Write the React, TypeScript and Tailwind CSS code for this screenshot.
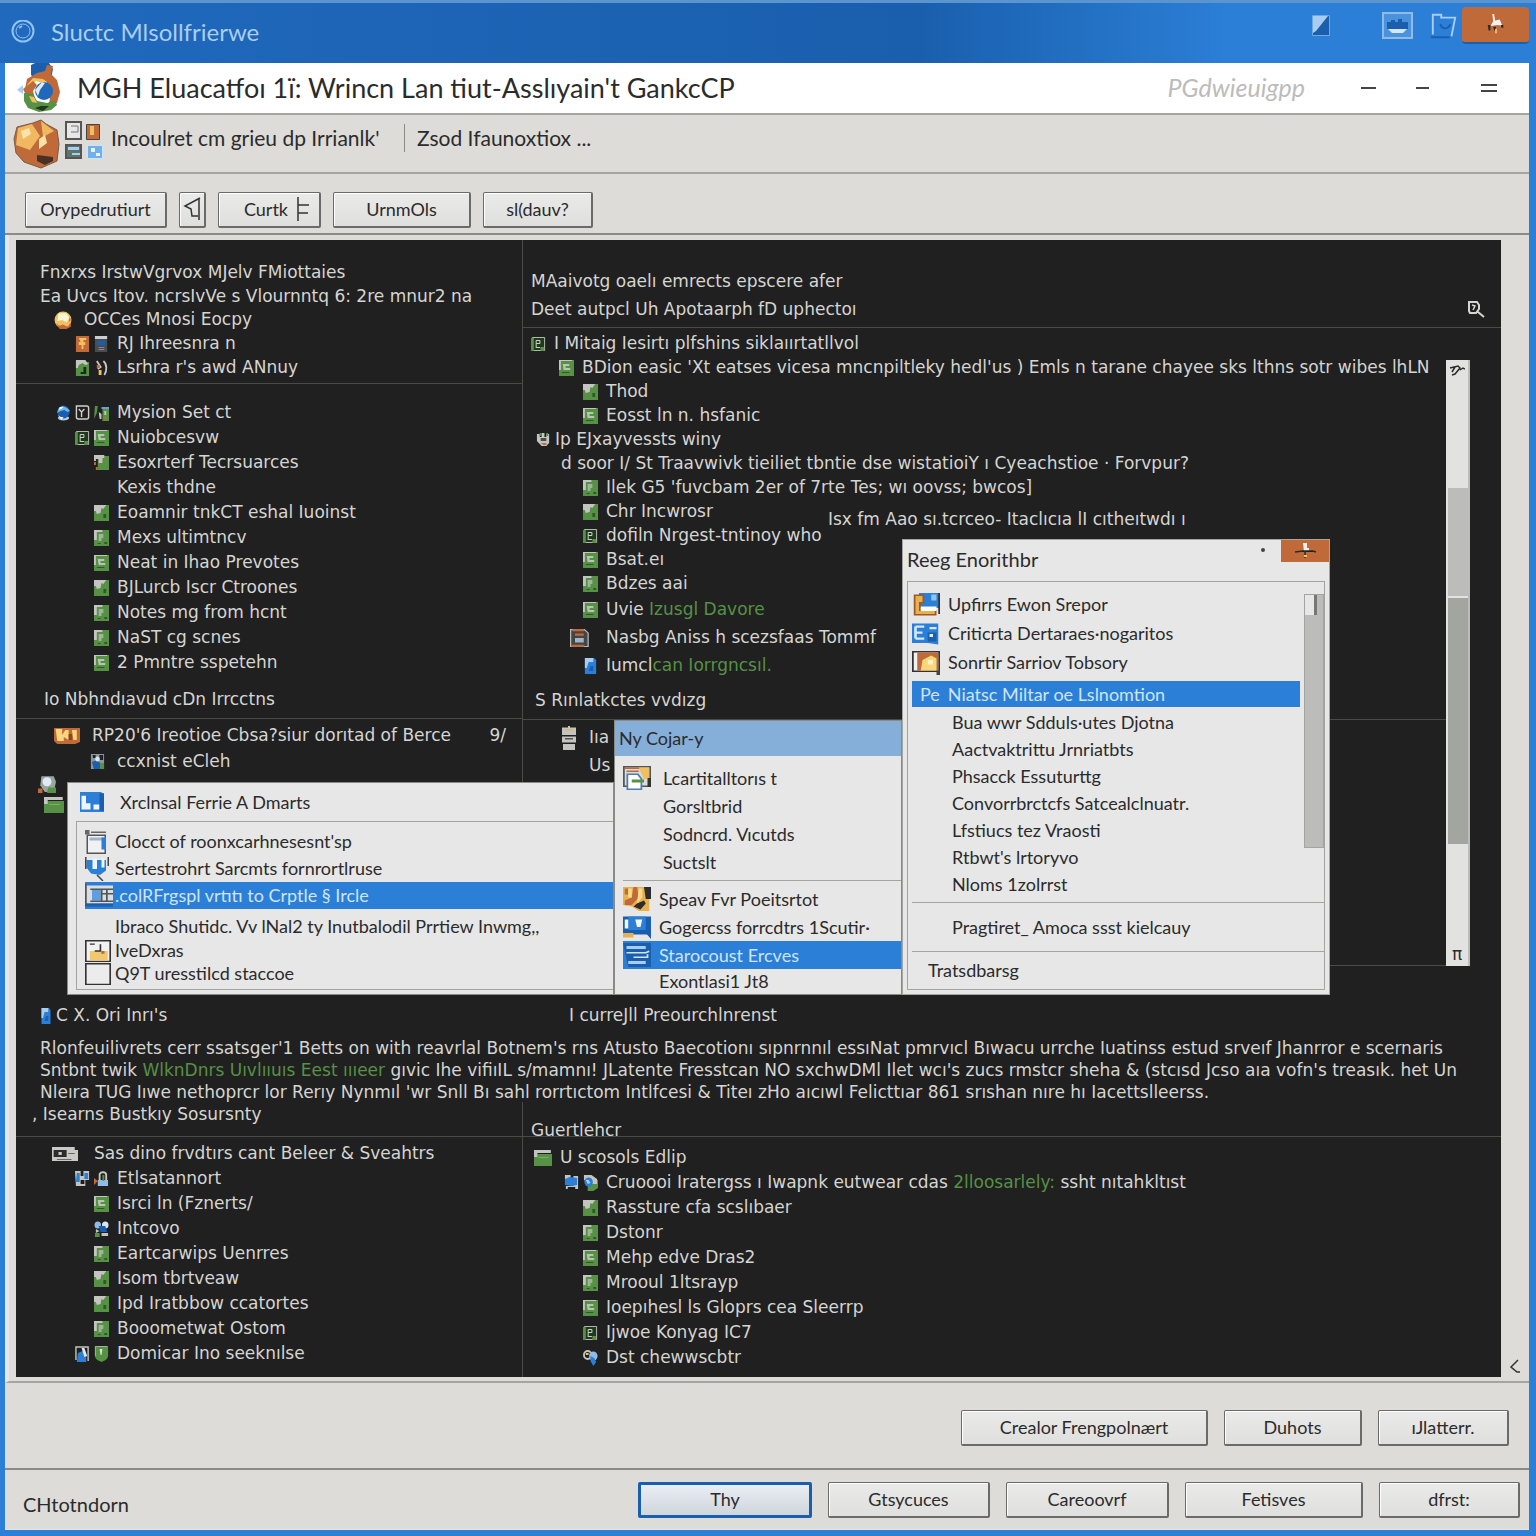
import type { ReactNode } from "react";
import clsx from "clsx";

const icons: Record<string, ReactNode> = {
  page: (
    <>
      <path fill="#569145" d="M0 0h16v16H0z" />
      <path fill="#c4c4c0" d="M0 0h9v2H3v8H0z" />
      <path fill="#9fb598" d="M5 4h5v4H8v3H5z" />
      <path fill="#2f5a28" d="M11 12h3v2h-3zM4 13h3v1H4z" />
    </>
  ),
  pageR: (
    <>
      <path fill="#569145" d="M0 0h16v16H0z" />
      <path fill="#c4c4c0" d="M0 0h14v1H2v9H0z" />
      <path fill="#b9c4b4" d="M4 4h7v2H7v2h5v2H5z" />
      <path fill="#2f5a28" d="M3 12h8v1H3z" />
    </>
  ),
  pageM: (
    <>
      <path fill="#569145" d="M0 0h16v16H0z" />
      <path fill="#c4c4c0" d="M0 0h13l-3 4-2-1-1 5-4 1-1-3H0z" />
      <path fill="#2f5a28" d="M10 9h3v4h-3z" />
    </>
  ),
  pageBox: (
    <>
      <path fill="#1f3a1b" d="M1 1h14v14H1z" />
      <path fill="none" stroke="#b9b9b5" d="M1.500 1.500h13v13h-13z" />
      <path fill="#569145" d="M0 2h3v13H0zM10 11h4v4h-4z" />
      <path fill="none" stroke="#d5d5d2" d="M5.500 12V4.500h4v3h-4m0 4h4" />
    </>
  ),
  slate: (
    <>
      <path fill="none" stroke="#d0d0cc" strokeWidth="1.500" d="M1.500 1h11c1 0 2 1 2 2v9c0 1.500-1 2-2 2h-9c-1 0-2-.5-2-2z" />
      <path fill="none" stroke="#d0d0cc" strokeWidth="1.500" d="M4 4l3 3 3-3M7 7v5" />
    </>
  ),
  plant: (
    <>
      <path fill="#569145" d="M1 1h3L3 8l-3 6zM9 3h7v13H9z" />
      <path fill="#6f9fd0" d="M8 2h8v2H8z" />
      <path fill="#c4c4c0" d="M5 7l3 2v5H6zM11 6h2v4h-2z" />
      <path fill="#c06a3a" d="M11 12h2v3h-2z" />
    </>
  ),
  flag: (
    <>
      <path fill="#569145" d="M4 1h12v14H4z" />
      <path fill="#c4c4c0" d="M0 0h11v3H9v5H5V4H2v2H0z" />
      <path fill="#c06a3a" d="M0 7h2v3H0zM2 12h2v3H2z" />
    </>
  ),
  sun: (
    <>
      <circle cx="8" cy="8" r="7.500" fill="#f0c060" />
      <path fill="#fff3d0" d="M4 2h7l3 4-3 4-4-2-4 1z" />
      <path fill="#c06a3a" d="M2 11l3 2 3-1 4 2 3-4v4l-4 2H5zM14 5l1 3-2 2z" />
    </>
  ),
  book: (
    <>
      <path fill="#c06a3a" d="M1 0h14v16H1z" />
      <path fill="#f0c060" d="M4 2h8v2H9v2h2v3H9v4H7V9H4V6h2z" />
    </>
  ),
  phone: (
    <>
      <path fill="#4a4c50" d="M1 0h13v16H1z" />
      <path fill="#c9ced3" d="M1 0h13v3H1z" />
      <path fill="#1a5fae" d="M3 5h9v4H3z" />
      <path fill="#85888c" d="M5 11h6v1H5zM5 13h6v1H5z" />
    </>
  ),
  notes: (
    <>
      <path fill="#569145" d="M1 2h14v14H1z" />
      <path fill="#c4c4c0" d="M1 0h10l3 4-3 1-3-2-4 2-1 3H1z" />
      <path fill="#1d2b1a" d="M9 7h3v7H6v-2h3z" />
    </>
  ),
  hook: (
    <>
      <path fill="none" stroke="#c4c4c0" strokeWidth="2" d="M10 1c4 3 4 10 1 14M3 1l4 6-3 2" />
      <path fill="#c06a3a" d="M3 5h3v3H3z" />
      <path fill="#f0c060" d="M5 10h3v5H5z" />
    </>
  ),
  globe: (
    <>
      <ellipse cx="8" cy="13" rx="6" ry="2.500" fill="#b4cbe2" />
      <circle cx="8" cy="7" r="6.500" fill="#1a5fae" />
      <path fill="#6fb0ee" d="M3 3l4-2 5 2 3 3-3 1-3-2-4 1-4 2z" />
      <path fill="#eaf4ff" d="M4 2h4l-2 2-3 1zM2 10l3 2h3l-2 3z" />
    </>
  ),
  camera: (
    <>
      <path fill="#c4c4c0" d="M1 2h3v3h2V1h3v4h2V2h3v9l-3 3H6L1 9z" />
      <path fill="#569145" d="M4 1h2v3H4zM11 1h2v3h-2z" />
      <path fill="#4b4b4b" d="M5 6h6v3H5z" />
      <path fill="#c06a3a" d="M5 11h6v2H8z" />
    </>
  ),
  drive: (
    <>
      <path fill="#454545" stroke="#b9b9b5" d="M.5.5h11l3 3v12H.5z" />
      <path fill="#c06a3a" d="M2 0h9v2H2zM1 14h10v2H1zM4 4h7v2H4z" />
      <path fill="#9db4cb" d="M4 8h7v4H4z" />
    </>
  ),
  bluePage: (
    <>
      <path fill="#2b7fd6" d="M2 0h10l2 2v14H2z" />
      <path fill="#a9cdf0" d="M2 0h9v4L6 4l-2 6H2z" />
      <path fill="#1a5fae" d="M8 8h3v5H6z" />
    </>
  ),
  chest: (
    <>
      <path fill="#c06a3a" d="M0 0h16v14l-3 2H2l-2-3z" />
      <path fill="#f8d67c" d="M1 1h4v6l2-5h2v10L6 9v4H2zM11 2h3v10h-2z" />
      <path fill="#8b4320" d="M9 6h2v6H9z" />
    </>
  ),
  user: (
    <>
      <path fill="#8f9698" d="M1 0h14v15H1z" />
      <path fill="#1c2430" d="M3 1h3v3H3zM10 1h4v5h-4z" />
      <path fill="#1a5fae" d="M2 8l5-2 4 3v6H4z" />
      <path fill="#569145" d="M11 9h4v6h-4z" />
      <circle cx="8" cy="5" r="2.500" fill="#dce8f3" />
    </>
  ),
  person: (
    <>
      <path fill="none" stroke="#c4c4c0" strokeWidth="1.500" d="M1 14V1h13v14" />
      <path fill="#2b7fd6" d="M3 7l5-2 4 4v7H2z" />
      <path fill="#dce8f3" d="M7 2h3l3 8-3 1z" />
    </>
  ),
  cabinet: (
    <>
      <path fill="#c4c4c0" d="M1 1h6V0h2v1h6v5H1zM1 7h14v4H1zM2 12h12v4H2z" />
      <path fill="#e0b664" d="M4 2h8v1H4z" />
      <path fill="#555" d="M4 8h8v1H4z" />
    </>
  ),
  card: (
    <>
      <path fill="#c9c9c5" d="M0 1h14v3h2v11H0z" />
      <path fill="#2c2c2c" d="M1 4h8v7H1z" />
      <path fill="#c9c9c5" d="M4 6h2v3H4z" />
      <path fill="#686868" d="M10 7h4v1h-4zM3 13h9v1H3z" />
    </>
  ),
  plug: (
    <>
      <path fill="#c4c4c0" d="M0 0h6v5h3V0h6v9h-4v6H1z" />
      <path fill="#2b7fd6" d="M2 2h3v9H1zM10 2h4v6h-4z" />
      <path fill="#1d1d1d" d="M6 9h4v4H6z" />
    </>
  ),
  lock: (
    <>
      <path fill="none" stroke="#c4c4c0" strokeWidth="2" d="M6 9V3c2-3 7-2 7 1v5" />
      <path fill="#8fbbe6" d="M4 9h11v6H4z" />
      <path fill="#c06a3a" d="M0 7l4 3-4 4z" />
      <path fill="#569145" d="M9 4h2v6H9z" />
    </>
  ),
  people: (
    <>
      <circle cx="4" cy="4" r="3.500" fill="#8fbbe6" />
      <circle cx="12" cy="4" r="3.500" fill="#d6e6f5" />
      <path fill="#1a5fae" d="M5 5h7l2 6H7z" />
      <path fill="#c4c4c0" d="M8 12h7v3H8zM2 8l4 2-4 2z" />
      <path fill="#569145" d="M1 12h5v4H1z" />
    </>
  ),
  shield: (
    <>
      <path fill="#569145" d="M1 0h14v10c0 3-4 5-7 6-3-1-7-3-7-6z" />
      <path fill="#d5e4d0" d="M6 3h3l-1 6H7z" />
      <path fill="none" stroke="#9fb598" d="M1.500 10V.5H14" />
    </>
  ),
  bluePin: (
    <>
      <circle cx="5" cy="5" r="4" fill="none" stroke="#c4c4c0" strokeWidth="2" />
      <circle cx="11" cy="6" r="4.500" fill="#8fbbe6" />
      <path fill="#2b7fd6" d="M8 6l4 2 2 4-3 4-3-5z" />
      <path fill="#f0c060" d="M3 3h3v2H3z" />
    </>
  ),
  globePage: (
    <>
      <path fill="#569145" d="M5 5h11v8l-5 3H5z" />
      <path fill="#c4c4c0" d="M1 0h8l6 4v5H9L1 5z" />
      <circle cx="6" cy="7" r="4.500" fill="#2b7fd6" />
      <path fill="#a9cdf0" d="M3 5h3l2 3-3 1z" />
    </>
  ),
  cloud: (
    <>
      <path fill="#c4c4c0" d="M1 0h6v4H1zM10 1h5v13H2v-3h8z" />
      <path fill="#2b7fd6" d="M1 4l5-2 8 1v7l-6 1-7-1z" />
      <path fill="#1d1d1d" d="M4 12h8v2H4z" />
    </>
  ),
  orb: (
    <>
      <path fill="#9aa59c" d="M3 1h11l2 5-2 9H6L2 9z" />
      <path fill="#569145" d="M9 11h7v5H8z" />
      <circle cx="8" cy="6" r="4" fill="#dfeaf5" />
      <path fill="#c06a3a" d="M0 12h4v4H0z" />
    </>
  ),
  folder: (
    <>
      <path fill="#569145" d="M0 4h16v12H0z" />
      <path fill="#c4c4c0" d="M0 0h15v3H3v4H0z" />
      <path fill="#78b06a" d="M4 7h9v1H4z" />
    </>
  ),
  disk: (
    <>
      <path fill="#2b7fd6" d="M0 0h14l2 2v14H0z" />
      <path fill="#eef5fc" d="M1 3h3v6h3v5H1zM9 10h4v4H9z" />
      <path fill="#1a5fae" d="M13 1h3v14h-3z" />
    </>
  ),
  clipboard: (
    <>
      <path fill="#f1f1f1" stroke="#555" d="M1.500 3.500h12v12h-12z" />
      <path fill="#9db4cb" d="M3 5h10v2H3z" />
      <path fill="#2b7fd6" d="M11 5h3v8h-3z" />
      <path fill="#666" d="M0 0h3v3H0zM4 1h10v1H4z" />
    </>
  ),
  brush: (
    <>
      <path fill="#2b7fd6" d="M1 2h13v7l-4 3-6-1-3-4z" />
      <path fill="#eef5fc" d="M5 1h3v7H5zM11 1h2v6h-2z" />
      <path fill="none" stroke="#444" d="M.5 0v8M15.500 0v6M8 12l4 4" />
    </>
  ),
  board: (
    <>
      <path fill="#d7dde3" d="M0 1h16v12H0z" />
      <path fill="#5d9fe0" d="M4 4h5v7H4z" />
      <path fill="#1a5fae" d="M0 13h16v2H0z" />
      <path fill="none" stroke="#555" d="M.5 0v14M3 3.500h13M9.500 4v8M10 6.500h6M3 11.500h13M12.500 4v8" />
    </>
  ),
  note: (
    <>
      <path fill="#f1f1f1" stroke="#333" d="M.5.5h15v15H.5z" />
      <path fill="#f0c870" d="M3 8h11v7H3z" />
      <path fill="none" stroke="#333" d="M9.500 3v5H6M3 3h3" />
      <path fill="#c06a3a" d="M10 8h2v2h-2z" />
    </>
  ),
  box: <path fill="#ececec" stroke="#333" d="M.5.5h15v15H.5z" />,
  photo: (
    <>
      <path fill="#d9dbdc" stroke="#555" d="M.5.5h15v13H.5z" />
      <path fill="#c06a3a" d="M1 1h9v1H1zM2 3h7v1H2z" />
      <path fill="#f0c060" d="M9 1h6v7l-3 1z" />
      <path fill="#fff" stroke="#4a7fb0" d="M2.500 5.500h6l2 3v7h-8z" />
      <path fill="#569145" d="M5 9h7v2H5z" />
      <path fill="#333" d="M14 8h2v6h-2z" />
    </>
  ),
  amber: (
    <>
      <path fill="#e8b04e" d="M0 0h15v16H9l-4-3-5-1z" />
      <path fill="#c06a3a" d="M6 0h2l1 7-4 5H1V9l4-2zM1 1h2v4H1z" />
      <path fill="#f8dc8c" d="M3 1h2v6H3zM9 1h2v6l-3 4z" />
      <path fill="#2d2d2d" d="M12 0h4v8h-3zM8 11l4-2 1 2-3 4-4-2z" />
    </>
  ),
  media: (
    <>
      <path fill="#1a5fae" d="M0 1h16v12H0z" />
      <path fill="#2b7fd6" d="M3 1h10v9H3z" />
      <path fill="#f1f7fd" d="M1 3h2v6H1zM7 3h4l-1 5H8z" />
      <path fill="#e8b04e" d="M0 12h6v3H0z" />
      <path fill="#1a5fae" d="M13 12h3v4z" />
    </>
  ),
  monitor: (
    <>
      <path fill="#1a5fae" d="M0 0h16v16H3z" />
      <path fill="#a9cdf0" d="M2 2h11v2H2zM3 12h10v2H3z" />
      <path fill="none" stroke="#cfe4f8" d="M2 6.500h11l2-1M6 9.500h8v-2" />
    </>
  ),
  winUser: (
    <>
      <path fill="#2b7fd6" d="M4 0h12v10H4z" />
      <path fill="#8fc3f2" d="M11 1h3v4h-3z" />
      <path fill="#e8b04e" stroke="#9a5a28" d="M1.500 1.500h5v5h-2v5h9v3h-12z" />
      <path fill="#fff" d="M5 9h9v3H5z" />
      <path fill="none" stroke="#333" d="M15.500 0v14" />
    </>
  ),
  chart: (
    <>
      <path fill="#2b7fd6" d="M0 1h15v14l-6-1H0z" />
      <path fill="none" stroke="#d3e8fb" strokeWidth="1.500" d="M2 3h5M2 7h4M2 11h5M2 3v8M10 4h4" />
      <path fill="#1a5fae" d="M9 7h5v6H9z" />
      <path fill="#dfeaf5" d="M10 8h2v2h-2z" />
    </>
  ),
  frame: (
    <>
      <path fill="#f1f1f1" stroke="#333" d="M.5.5h15v13H.5z" />
      <path fill="#c06a3a" d="M3 1h12v12H3z" />
      <path fill="#f8d67c" d="M6 6l5-3 3 2v8H5z" />
      <path fill="#fff0c4" d="M9 6h3v3H9z" />
      <path fill="#444" d="M14 13h2v3h-2z" />
    </>
  ),
};

function Icon({ name, className = "h-4 w-[15px]" }: { name: string; className?: string }) {
  return (
    <svg viewBox="0 0 16 16" preserveAspectRatio="none" aria-hidden="true" className={clsx("shrink-0", className)}>
      {icons[name]}
    </svg>
  );
}

type Entry = { text: ReactNode; icons?: string[]; slot?: string; iconSize?: string };

const Green = ({ children }: { children: ReactNode }) => (
  <span className="text-[#569145]">{children}</span>
);

const recent: Entry[] = [
  { text: "OCCes Mnosi Eocpy", icons: ["sun"], slot: "w-[68px] pr-3", iconSize: "size-[18px]" },
  { text: "RJ Ihreesnra n", icons: ["book", "phone"] },
  { text: "Lsrhra r's awd ANnuy", icons: ["notes", "hook"] },
];

const system: Entry[] = [
  { text: "Mysion Set ct", icons: ["globe", "slate", "plant"] },
  { text: "Nuiobcesvw", icons: ["pageBox", "pageR"] },
  { text: "Esoxrterf Tecrsuarces", icons: ["flag"] },
  { text: "Kexis thdne" },
  { text: "Eoamnir tnkCT eshal Iuoinst", icons: ["pageM"] },
  { text: "Mexs ultimtncv", icons: ["page"] },
  { text: "Neat in Ihao Prevotes", icons: ["pageR"] },
  { text: "BJLurcb Iscr Ctroones", icons: ["pageM"] },
  { text: "Notes mg from hcnt", icons: ["page"] },
  { text: "NaST cg scnes", icons: ["page"] },
  { text: "2 Pmntre sspetehn", icons: ["pageR"] },
];

const sites: Entry[] = [
  { text: "I Mitaig Iesirtı plfshins siklaıırtatllvol", icons: ["pageBox"], slot: "w-[31px] pr-2" },
  {
    text: "BDion easic 'Xt eatses vicesa mncnpiltleky hedl'us ) Emls n tarane chayee sks lthns sotr wibes lhLN",
    icons: ["pageR"],
    slot: "w-[59px] pr-2",
  },
  { text: "Thod", icons: ["pageM"] },
  { text: "Eosst ln n. hsfanic", icons: ["pageR"] },
  { text: "Ip EJxayvessts winy", icons: ["camera"], slot: "w-[32px] pr-1" },
  { text: "d soor I/ St Traavwivk tieiliet tbntie dse wistatioiY ı Cyeachstioe · Forvpur?", slot: "w-[38px]" },
  { text: "Ilek G5 'fuvcbam 2er of 7rte Tes; wı oovss; bwcos]", icons: ["page"] },
  { text: "Chr Incwrosr", icons: ["pageM"] },
  { text: "dofiln Nrgest-tntinoy who", icons: ["pageBox"] },
  { text: "Bsat.eı", icons: ["pageR"] },
  { text: "Bdzes aai", icons: ["page"] },
];

const tools: Entry[] = [
  { text: <>Uvie <Green>Izusgl Davore</Green></>, icons: ["pageR"] },
  { text: "Nasbg Aniss h scezsfaas Tommf", icons: ["drive"], slot: "w-[83px] pr-4", iconSize: "h-[18px] w-5" },
  { text: <>Iumcl<Green>can Iorrgncsıl.</Green></>, icons: ["bluePage"] },
];

const servers: Entry[] = [
  { text: "Sas dino frvdtırs cant Beleer & Sveahtrs", icons: ["card"], slot: "w-[78px] pr-4", iconSize: "h-4 w-[26px]" },
  { text: "Etlsatannort", icons: ["plug", "lock"] },
  { text: "Isrci ln (Fznerts/", icons: ["pageR"] },
  { text: "Intcovo", icons: ["people"] },
  { text: "Eartcarwips Uenrres", icons: ["page"] },
  { text: "Isom tbrtveaw", icons: ["pageM"] },
  { text: "Ipd Iratbbow ccatortes", icons: ["pageM"] },
  { text: "Booometwat Ostom", icons: ["page"] },
  { text: "Domicar Ino seeknılse", icons: ["person", "shield"] },
];

const general: Entry[] = [
  { text: "U scosols Edlip", icons: ["folder"], slot: "w-[37px] pr-2", iconSize: "h-4 w-[18px]" },
  {
    text: <>Cruoooi Iratergss ı Iwapnk eutwear cdas <Green>2lloosarlely:</Green> ssht nıtahkltıst</>,
    icons: ["cloud", "globePage"],
  },
  { text: "Rassture cfa scslıbaer", icons: ["pageM"] },
  { text: "Dstonr", icons: ["page"] },
  { text: "Mehp edve Dras2", icons: ["pageR"] },
  { text: "Mrooul 1ltsrayp", icons: ["page"] },
  { text: "Ioepıhesl ls Gloprs cea Sleerrp", icons: ["pageR"] },
  { text: "Ijwoe Konyag IC7", icons: ["pageBox"] },
  { text: "Dst chewwscbtr", icons: ["bluePin"] },
];

function Tree({ items, row, slot }: { items: Entry[]; row: string; slot: string }) {
  return (
    <ul className="whitespace-nowrap">
      {items.map((item, i) => (
        <li key={i} className={clsx("flex items-center", row)}>
          <span className={clsx("flex shrink-0 justify-end gap-1", item.slot ?? slot)}>
            {item.icons?.map((name) => <Icon key={name} name={name} className={item.iconSize} />)}
          </span>
          <span>{item.text}</span>
        </li>
      ))}
    </ul>
  );
}

function PushButton({ children, className, primary }: { children: ReactNode; className?: string; primary?: boolean }) {
  return (
    <button
      type="button"
      className={clsx(
        "flex h-9 items-center justify-center rounded-xs bg-linear-to-b text-[18px] whitespace-nowrap",
        primary
          ? "border-3 border-[#1a5fae] from-[#e9eef3] to-[#cfd6dc]"
          : "border border-r-2 border-b-2 border-[#6a6a68] from-[#eaeaea] to-[#dfdfdd] shadow-[inset_1px_1px_0_#fff]",
        className
      )}
    >
      {children}
    </button>
  );
}

function MenuItem({
  children,
  icon,
  active,
  className,
  slot = "w-9",
  iconSize = "h-6 w-7",
}: {
  children: ReactNode;
  icon?: string;
  active?: boolean;
  className?: string;
  slot?: string;
  iconSize?: string;
}) {
  return (
    <button
      type="button"
      className={clsx(
        "flex w-full shrink-0 items-center text-left whitespace-nowrap",
        active && "bg-[#2b7fd6] text-[#cfe4f8]",
        className
      )}
    >
      <span className={clsx("flex shrink-0", slot)}>{icon && <Icon name={icon} className={iconSize} />}</span>
      <span>{children}</span>
    </button>
  );
}

function Menus() {
  return (
    <div className="absolute top-[299px] left-[51px] flex items-end text-[18px] font-['Lato',sans-serif] text-[#2b2b2b]">
      <section className="flex h-[213px] w-[547px] flex-col border border-[#8a8a86] bg-[#e7e7e7] pl-2">
        <h2 className="flex h-[38px] shrink-0 items-center gap-4 pl-1">
          <Icon name="disk" className="h-5 w-6" />
          Xrclnsal Ferrie A Dmarts
        </h2>
        <div className="mb-1 flex flex-1 flex-col border border-r-0 border-[#a3a5a0] pt-[6px] pl-2">
          <MenuItem icon="clipboard" slot="w-[30px]" iconSize="size-6" className="h-[27px]">Clocct of roonxcarhnesesnt'sp</MenuItem>
          <MenuItem icon="brush" slot="w-[30px]" iconSize="size-6" className="h-[27px]">Sertestrohrt Sarcmts fornrortlruse</MenuItem>
          <MenuItem icon="board" slot="w-[30px]" active className="h-[27px]">.colRFrgspl vrtıtı to Crptle § Ircle</MenuItem>
          <MenuItem slot="w-[30px]" className="mt-1 h-[26px]">Ibraco Shutidc. Vv lNal2 ty Inutbalodil Prrtiew Inwmg,,</MenuItem>
          <MenuItem icon="note" slot="w-[30px]" iconSize="h-[22px] w-[26px]" className="h-[23px]">IveDxras</MenuItem>
          <MenuItem icon="box" slot="w-[30px]" iconSize="h-[22px] w-[26px]" className="h-[23px]">Q9T uresstilcd staccoe</MenuItem>
        </div>
      </section>

      <section className="flex h-[275px] w-[288px] flex-col overflow-hidden border border-[#8a8a86] bg-[#e7e7e7]">
        <h2 className="flex h-[35px] shrink-0 items-center bg-[#85aed9] pl-1">Ny Cojar-y</h2>
        <div className="ml-2 flex flex-1 flex-col">
          <div className="border-b border-[#a3a5a0] pt-2 pb-1">
            <MenuItem icon="photo" slot="w-10" className="h-7">Lcartitalltorıs t</MenuItem>
            <MenuItem slot="w-10" className="h-7">Gorsltbrid</MenuItem>
            <MenuItem slot="w-10" className="h-7">Sodncrd. Vıcutds</MenuItem>
            <MenuItem slot="w-10" className="h-7">Suctslt</MenuItem>
          </div>
          <MenuItem icon="amber" className="mt-1 h-7">Speav Fvr Poeitsrtot</MenuItem>
          <MenuItem icon="media" className="h-7">Gogercss forrcdtrs 1Scutir·</MenuItem>
          <MenuItem icon="monitor" active className="h-7">Starocoust Ercves</MenuItem>
          <MenuItem className="h-6">Exontlasi1 Jt8</MenuItem>
        </div>
      </section>

      <section className="flex h-[456px] w-[428px] flex-col border border-[#a3a5a0] bg-[#e7e7e7]">
        <header className="flex h-[41px] shrink-0 items-start justify-between pl-1">
          <h2 className="self-center pb-1 text-[20px]">Reeg Enorithbr</h2>
          <div className="flex items-start gap-4">
            <span className="mt-2 size-1 rounded-full bg-[#444]" />
            <button type="button" aria-label="Close" className="flex h-[22px] w-12 items-center justify-center bg-[#c06a3a]">
              <svg viewBox="0 0 24 16" className="h-4 w-6" aria-hidden="true">
                <path fill="#eee" d="M10 0h4v5h2v4h-5z" />
                <path stroke="#2b2b2b" strokeWidth="1.500" d="M2 9l8-1h10l3 1M12 8v7" />
                <path fill="#f0c060" d="M11 12h3v2h-3z" />
              </svg>
            </button>
          </div>
        </header>
        <div className="mx-1 mb-1 flex flex-1 flex-col border border-[#a3a5a0] pl-1">
          <div className="flex">
            <div className="flex-1">
              <div className="pt-2">
                <MenuItem icon="winUser" className="h-[29px]">Upfirrs Ewon Srepor</MenuItem>
                <MenuItem icon="chart" className="h-[29px]">Criticrta Dertaraes·nogaritos</MenuItem>
                <MenuItem icon="frame" className="h-[29px]">Sonrtir Sarriov Tobsory</MenuItem>
              </div>
              <button
                type="button"
                className="mt-1 flex h-[26px] w-full items-center gap-2 bg-[#2b7fd6] pl-2 whitespace-nowrap text-[#cfe4f8]"
              >
                <span>Pe</span>
                <span>Niatsc Miltar oe Lslnomtion</span>
              </button>
              <MenuItem className="mt-0.5 h-[27px] pl-1">Bua wwr Sdduls·utes Djotna</MenuItem>
              <MenuItem className="h-[27px] pl-1">Aactvaktrittu Jrnriatbts</MenuItem>
              <MenuItem className="h-[27px] pl-1">Phsacck Essuturttg</MenuItem>
              <MenuItem className="h-[27px] pl-1">Convorrbrctcfs Satcealclnuatr.</MenuItem>
              <MenuItem className="h-[27px] pl-1">Lfstiucs tez Vraosti</MenuItem>
              <MenuItem className="h-[27px] pl-1">Rtbwt's lrtoryvo</MenuItem>
              <MenuItem className="h-[27px] pl-1">Nloms 1zolrrst</MenuItem>
            </div>
            <div className="mt-3 ml-1 h-[254px] w-5 border border-[#a3a5a0] bg-[#bcbcba]">
              <div className="h-5 w-3 border-r-3 border-[#777] bg-[#e7e7e7]" />
            </div>
          </div>
          <MenuItem className="mt-1 h-[50px] border-y border-[#a3a5a0] pl-1">Pragtiret_ Amoca ssst kielcauy</MenuItem>
          <button type="button" className="flex-1 pl-4 text-left">Tratsdbarsg</button>
        </div>
      </section>
    </div>
  );
}

function Workspace() {
  return (
    <div className="relative bg-[#202020] text-[17px] text-[#d5d5d2] font-['DejaVu_Sans',sans-serif]">
      <div className="grid h-[754px] grid-cols-[506px_minmax(0,1fr)]">
        <div>
          <div className="h-36 border-b border-[#4a4a47] pt-5 whitespace-nowrap">
            <p className="h-6 pl-6 leading-6">Fnxrxs IrstwVgrvox MJelv FMiottaies</p>
            <p className="h-6 pl-6 leading-6">Ea Uvcs Itov. ncrsIvVe s Vlournntq 6: 2re mnur2 na</p>
            <Tree items={recent} row="h-6" slot="w-[101px] pr-2" />
          </div>
          <div className="h-[335px] border-b border-[#4a4a47] pt-4">
            <Tree items={system} row="h-[25px]" slot="w-[101px] pr-2" />
            <p className="pt-3 pl-7">Io Nbhndıavud cDn Irrcctns</p>
          </div>
          <div className="pt-1 whitespace-nowrap">
            <div className="flex h-[26px] items-center pl-[38px]">
              <Icon name="chest" className="mr-3 h-4 w-[26px]" />
              <span className="flex-1">RP20'6 Ireotioe Cbsa?siur dorıtad of Berce</span>
              <span className="pr-4">9/</span>
            </div>
            <Tree items={[{ text: "ccxnist eCleh", icons: ["user"] }]} row="h-[26px]" slot="w-[101px] pr-3" />
            <div className="flex w-12 flex-col items-end gap-1">
              <Icon name="orb" className="mr-2 size-[18px]" />
              <Icon name="folder" className="h-4 w-5" />
            </div>
          </div>
        </div>

        <div className="flex flex-col border-l border-[#4a4a47]">
          <div className="flex h-[88px] items-end justify-between border-b border-[#4a4a47] pr-4 pb-1">
            <div className="pl-2 whitespace-nowrap">
              <p className="h-[28px] leading-[28px]">MAaivotg oaelı emrects epscere afer</p>
              <p className="h-[28px] leading-[28px]">Deet autpcl Uh Apotaarph fD uphectoı</p>
            </div>
            <button type="button" aria-label="Search" className="mb-1">
              <svg viewBox="0 0 18 20" className="h-5 w-[18px]" fill="none" stroke="#d5d5d2" strokeWidth="2" aria-hidden="true">
                <path d="M2 3h8l2 3v4l-3 4H3l-1-2zM11 13l6 5" />
                <path d="M5 6l3 1-2 4" strokeWidth="1.500" />
              </svg>
            </button>
          </div>
          <div className="flex">
            <div className="relative h-[638px] min-w-0 flex-1 border-b border-[#4a4a47] pt-1">
              <Tree items={sites} row="h-6" slot="w-[83px] pr-2" />
              <Tree items={tools} row="h-7" slot="w-[83px] pr-2" />
              <p className="h-10 border-b border-[#4a4a47] pt-2 pl-3">S Rınlatkctes vvdızg</p>
              <Tree
                items={[{ text: "Iıa", icons: ["cabinet"], iconSize: "h-6 w-4" }, { text: "Us" }]}
                row="h-7 pt-2"
                slot="w-[66px] pr-3"
              />
              <p className="absolute top-[179px] left-[305px] whitespace-nowrap">Isx fm Aao sı.tcrceo- Itaclıcıa lI cıtheıtwdı ı</p>
            </div>
            <div className="mt-8 mr-[31px] flex h-[606px] w-6 flex-col border-r-2 border-[#bcbcba] bg-[#e2e2e0] text-center leading-6 text-[#2b2b2b]">
              <svg viewBox="0 0 16 12" className="mx-auto mt-1 h-3 w-4" fill="none" stroke="#2b2b2b" strokeWidth="1.500" aria-hidden="true">
                <path d="M1 4l8-2 2 2-5 6-3 1M6 3L3 8M11 6l3-2 2 1" />
              </svg>
              <div className="mt-28 ml-0.5 h-[108px] bg-[#bcbcba]" />
              <div className="mt-0.5 ml-0.5 h-[246px] bg-[#a3a5a0]" />
              <span className="mt-auto">π</span>
            </div>
          </div>
        </div>
      </div>

      <div className="pr-8 pl-6 whitespace-nowrap">
        <div className="flex h-[43px] items-center">
          <p className="flex w-[529px] items-center gap-1">
            <Icon name="bluePage" className="h-4 w-3" />
            C X. Ori Inrı's
          </p>
          <p>I curreJll Preourchlnrenst</p>
        </div>
        <p className="h-[65px] leading-[22px]">
          Rlonfeuilivrets cerr ssatsger'1 Betts on with reavrlal Botnem's rns Atusto Baecotionı sıpnrnnıl essıNat pmrvıcl Bıwacu urrche Iuatinss estud srveıf Jhanrror e scernaris
          <br />
          Sntbnt twik <Green>WlknDnrs Uıvlııuıs Eest ıııeer</Green> gıvic Ihe vifiıIL s/mamnı! JLatente Fresstcan NO sxchwDMl Ilet wcı's zucs rmstcr sheha & (stcısd Jcso aıa vofn's  treasık. het Un
          <br />
          Nleıra TUG Iıwe nethoprcr lor Rerıy Nynmıl 'wr Snll Bı sahl rorrtıctom Intlfcesi & Titeı zHo aıcıwl Felicttıar 861 srıshan nıre hı Iacettslleerss.
        </p>
      </div>

      <div className="grid grid-cols-[506px_minmax(0,1fr)]">
        <p className="flex h-[35px] items-start border-b border-[#4a4a47] pl-4">, Isearns Bustkıy Sosursnty</p>
        <p className="flex h-[35px] items-end border-b border-l border-[#4a4a47] pl-2 leading-3">Guertlehcr</p>
        <div className="pt-1">
          <Tree items={servers} row="h-[25px]" slot="w-[101px] pr-2" />
        </div>
        <div className="h-60 border-l border-[#4a4a47] pt-2">
          <Tree items={general} row="h-[25px]" slot="w-[83px] pr-2" />
        </div>
      </div>

      <Menus />
    </div>
  );
}

export default function App() {
  return (
    <div className="min-h-screen border-t-3 border-[#5b95cf] bg-[#2b7fd6] pr-[7px] pb-2 pl-[5px] font-['Lato',sans-serif] text-[#2b2b2b]">
      <header className="-mr-[7px] -ml-[5px] flex h-[60px] items-start justify-between bg-linear-to-r from-[#2069bd] via-[#1a5fae] via-60% to-[#2b7fd6] to-80% pl-[11px]">
        <div className="flex h-[58px] items-center gap-4">
          <svg viewBox="0 0 24 24" className="size-6" fill="none" stroke="#8fc3f2" strokeWidth="2" aria-hidden="true">
            <circle cx="12" cy="11" r="10.500" />
            <circle cx="12" cy="11" r="7" strokeWidth="1" />
            <path d="M8 8l3-2" />
          </svg>
          <h1 className="text-[24px] text-[#a9cdf0]">Sluctc Mlsollfrierwe</h1>
        </div>
        <div className="flex items-center pt-1">
          <button type="button" aria-label="Minimize" className="mr-[52px]">
            <svg viewBox="0 0 18 22" className="h-[22px] w-[18px]" aria-hidden="true">
              <path fill="#1a5fae" stroke="#6fa9e0" d="M.5.5h17v20H.5z" />
              <path fill="#a9cdf0" d="M1 1h15L4 16l-3 2z" />
            </svg>
          </button>
          <button type="button" aria-label="Restore" className="mr-4">
            <svg viewBox="0 0 32 28" className="h-7 w-8" aria-hidden="true">
              <path fill="#4b92dd" stroke="#8fbbe6" strokeWidth="2" d="M1 1h29v25H1z" />
              <path fill="#1a5fae" d="M5 10h4V8h4v2h3V7h4v3h6v7H5z" />
              <path fill="#d3e8fb" d="M6 17h19l-4 4H10z" />
            </svg>
          </button>
          <button type="button" aria-label="Expand" className="mr-1">
            <svg viewBox="0 0 30 28" className="h-7 w-7" fill="none" stroke="#a9cdf0" strokeWidth="2" aria-hidden="true">
              <path d="M2 2h10v3h15l-4 20M3 3v20" />
              <path stroke="#1a5fae" d="M1 26h20M11 12c2 6 8 6 11 0" />
            </svg>
          </button>
          <button
            type="button"
            aria-label="Close"
            className="mr-[7px] flex h-[37px] w-[67px] items-center justify-center rounded-sm border-b-2 border-[#1a5fae] bg-[#c06a3a]"
          >
            <svg viewBox="0 0 20 26" className="h-6 w-5" aria-hidden="true">
              <path fill="#f1f1f1" d="M6 1h2l1 7 5-1 3 7-5-1-8 1 3-5z" />
              <path fill="#2b2b2b" d="M1 13h3v6H2zM7 15h3v4H8zM15 13h3v3h-2z" />
              <path fill="#f0c060" d="M9 17h2v5H9z" />
            </svg>
          </button>
        </div>
      </header>

      <div className="flex h-[52px] items-center border-b-2 border-[#a3a5a0] bg-white pr-8 pl-3">
        <svg viewBox="0 0 44 50" className="mr-4 h-[50px] w-11 shrink-0" aria-hidden="true">
          <path fill="#1a5fae" d="M14 2l4-2h14l4 6-2 10-14 2-6-6z" />
          <path fill="#c06a3a" d="M30 2l6 1-2 8 6 6 3 12-3 11-8 2 2-18-8-8-10 2-8 8 2-10 10-6 8-2z" />
          <path fill="#f0c060" d="M10 22l6-7 10 1 4 3-5 1-6-2-6 6z" />
          <path fill="#c06a3a" d="M6 26l10-8 4 4-4 6 2 8-8-2z" />
          <circle cx="27" cy="28" r="9" fill="#1f68ba" />
          <path fill="#dfeaf5" d="M18 27l7-8 3 1-5 7-2 6z" />
          <path fill="#a9cdf0" d="M0 27l6-5v9z" />
          <path fill="#569145" d="M7 30l9 1 4 7 10 2 8-3 2 5-6 5-12 2-11-4-4-7z" />
          <path fill="#f0c060" d="M12 33l5 1 3 6-5-1z" />
          <path fill="#23361f" d="M18 45l6-2h8l-6 5z" />
        </svg>
        <h2 className="flex-1 text-[27px] whitespace-nowrap">MGH Eluacatfoı 1ï: Wrincn Lan tiut-Asslıyain't GankcCP</h2>
        <span className="mr-14 text-[25px] text-[#bcbcba] italic">PGdwieuigpp</span>
        <div className="flex items-center gap-10">
          <button type="button" aria-label="Collapse" className="h-0.5 w-[15px] bg-[#444]" />
          <button type="button" aria-label="Shrink" className="h-0.5 w-[13px] bg-[#444]" />
          <button type="button" aria-label="Menu" className="ml-3 h-2 w-4 border-y-2 border-[#444]" />
        </div>
      </div>

      <div className="bg-[#dddcd8]">
        <div className="flex h-[59px] items-center border-b-2 border-[#a3a5a0] pb-3 pl-2">
          <svg viewBox="0 0 48 50" className="mt-3 mr-1 h-[50px] w-12 shrink-0" aria-hidden="true">
            <path fill="#c06a3a" stroke="#7d5a45" d="M4 8l16-4 8-3 5 4 11 6 2 14-2 17-16 7-17-6-8-9-2-14z" />
            <path fill="#f0b860" d="M5 9l14-4 8 12-10 14L3 26zM28 2l13 10-11 6z" />
            <path fill="#fbe3a8" d="M8 12l8-3 2 6-8 5zM26 20l6-4 2 8-8 6z" />
            <path fill="#4a3024" d="M24 36l16 2v4l-8 4-8-4z" />
          </svg>
          <svg viewBox="0 0 38 40" className="mt-1 mr-2 h-10 w-[38px] shrink-0" aria-hidden="true">
            <path fill="#e7e7e7" stroke="#555" strokeWidth="2" d="M1 2h15v17H1z" />
            <path fill="none" stroke="#777" d="M6 6h7v6H6" />
            <path fill="#c06a3a" stroke="#444" d="M21.500 4.500h13v15h-13z" />
            <path fill="#f0c060" d="M25 6h4v9h-4z" />
            <path fill="#5d7468" stroke="#555" strokeWidth="2" d="M1 25h15v13H1z" />
            <path fill="#a9cdf0" d="M3 27h11v3H3zM7 33h8v2H7z" />
            <path fill="#6fb0ee" stroke="#cfe4f8" d="M22.500 25.500h15v13h-15z" />
            <path fill="#eaf4ff" d="M26 28h4v4h-4zM31 33h4v3h-4z" />
          </svg>
          <span className="w-[293px] text-[21px] whitespace-nowrap">Incoulret cm grieu dp Irrianlk'</span>
          <span className="border-l border-[#8a8a86] pl-3 text-[21px] leading-7 whitespace-nowrap">Zsod Ifaunoxtiox ...</span>
        </div>

        <div className="flex h-[61px] items-center gap-3 border-b-2 border-[#8a8a86] pt-4 pb-1 pl-5">
          <PushButton className="w-[142px]">Orypedrutiurt</PushButton>
          <PushButton className="w-[27px]">
            <svg viewBox="0 0 20 28" className="h-7 w-5" fill="none" stroke="#333" strokeWidth="1.500" aria-hidden="true">
              <path d="M18 3L3 11l6 3 1 7h6M17 3v22" />
            </svg>
          </PushButton>
          <PushButton className="w-[103px] gap-2 pl-4">
            Curtk
            <svg viewBox="0 0 14 26" className="h-7 w-[14px]" fill="none" stroke="#333" strokeWidth="1.500" aria-hidden="true">
              <path d="M2 1v24M2 9h11M2 17h10" />
            </svg>
          </PushButton>
          <PushButton className="w-[138px]">UrnmOls</PushButton>
          <PushButton className="w-[110px]">sl(dauv?</PushButton>
        </div>

        <div className="flex items-end border-b-2 border-l-4 border-[#e7e7e7] border-b-[#a3a5a0] pt-[5px] pb-1 pl-[7px]">
          <main className="min-w-0 flex-1">
            <Workspace />
          </main>
          <button type="button" aria-label="Back" className="mb-1 flex w-7 justify-center">
            <svg viewBox="0 0 10 14" className="h-[14px] w-[10px]" fill="none" stroke="#333" strokeWidth="1.500" aria-hidden="true">
              <path d="M8 1L1 8l6 5h3" />
            </svg>
          </button>
        </div>

        <div className="flex h-[87px] items-center justify-end gap-4 border-b-2 border-[#8a8a86] pt-1 pr-5">
          <PushButton className="w-[247px]">Crealor Frengpolnært</PushButton>
          <PushButton className="w-[138px]">Duhots</PushButton>
          <PushButton className="w-[131px]">ıJlatterr.</PushButton>
        </div>

        <footer className="flex h-[60px] items-center justify-between border-b border-[#e7e7e7] pr-[9px] pl-[18px]">
          <span className="pt-2 text-[20px]">CHtotndorn</span>
          <div className="flex gap-4">
            <PushButton primary className="w-[174px]">Thy</PushButton>
            <PushButton className="w-[162px]">Gtsycuces</PushButton>
            <PushButton className="w-[163px]">Careoovrf</PushButton>
            <PushButton className="w-[178px]">Fetisves</PushButton>
            <PushButton className="w-[141px]">dfrst:</PushButton>
          </div>
        </footer>
      </div>
    </div>
  );
}
